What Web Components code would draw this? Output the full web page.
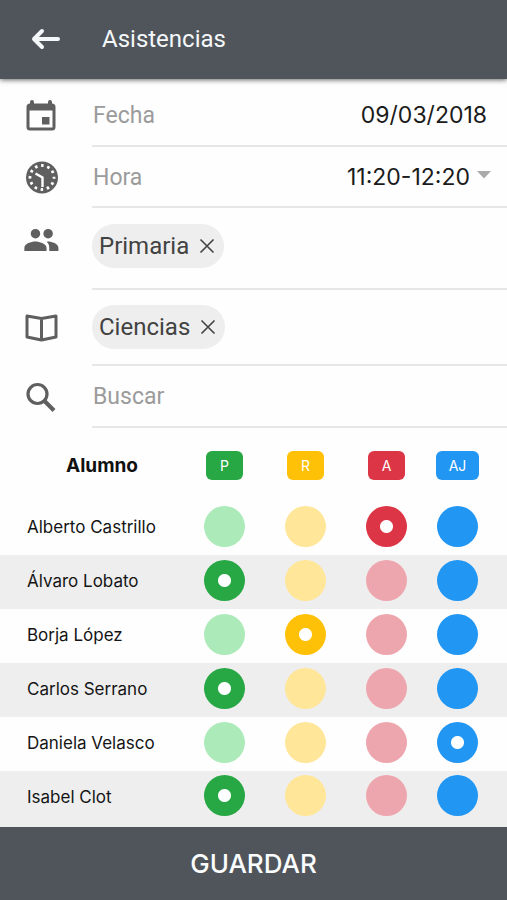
<!DOCTYPE html>
<html lang="es">
<head>
<meta charset="utf-8">
<meta name="viewport" content="width=device-width, initial-scale=1">
<title>Asistencias</title>
<style>
  body { margin: 0; background: #fefefe; font-family: Inter, "Liberation Sans", sans-serif; }
</style>
</head>
<body>
<attendance-page></attendance-page>
<script>
function define(name, html, setup) {
  const template = document.createElement('template');
  template.innerHTML = html;
  customElements.define(name, class extends HTMLElement {
    constructor() {
      super();
      this.attachShadow({ mode: 'open' }).append(template.content.cloneNode(true));
      if (setup) setup(this, this.shadowRoot);
    }
  });
}

define('app-header', `
  <style>
    :host { display: flex; align-items: center; gap: 40px; height: 79px; padding: 0 30px 2px; box-sizing: border-box;
      background: #50555c; color: #f4f8fa; box-shadow: 0 1px 5px rgba(0,0,0,.6); position: relative; }
    button { border: 0; padding: 0; background: none; color: inherit; display: flex; cursor: pointer; }
    h1 { margin: 0; font: 400 24px/32px Roboto, sans-serif; }
  </style>
  <button type="button" aria-label="Volver">
    <svg width="32" height="24" viewBox="0 0 32 24" fill="none" stroke="currentColor" stroke-width="4" stroke-linecap="round" stroke-linejoin="round"><path d="M28 12H4M12 4L4 12L12 20"/></svg>
  </button>
  <h1><slot></slot></h1>
`);

define('field-row', `
  <style>
    :host { display: grid; grid-template-columns: 92px minmax(0, 1fr); }
    .icon { display: flex; align-items: center; padding-left: 22px; color: #5f5f5f; }
    .body { display: flex; align-items: center; padding-right: 16px; border-bottom: 2px solid #e7e7e7; }
  </style>
  <div class="icon"><slot name="icon"></slot></div>
  <div class="body"><slot></slot></div>
`);

define('filter-chip', `
  <style>
    :host { display: inline-flex; align-items: center; gap: 9px; height: 44px; padding: 0 8px 0 7px; box-sizing: border-box;
      border-radius: 22px; background: #eee; color: #424242; font: 400 24px/32px Roboto, sans-serif; }
    button { border: 0; padding: 0; background: none; color: inherit; display: flex; cursor: pointer; }
  </style>
  <slot></slot>
  <button type="button" aria-label="Quitar">
    <svg width="18" height="18" viewBox="0 0 18 18" fill="none" stroke="currentColor" stroke-width="1.6"><path d="M2.5 2.5L15.5 15.5M15.5 2.5L2.5 15.5"/></svg>
  </button>
`);

define('status-badge', `
  <style>
    :host { display: inline-block; min-width: 37px; padding: 0 13px; box-sizing: border-box; border-radius: 6px;
      background: var(--on); color: #fff; font: 400 14px/29px Inter, sans-serif; text-align: center; }
  </style>
  <slot></slot>
`);

define('attendance-table', `
  <style>
    :host { display: block; }
    table { width: 100%; border-collapse: collapse; table-layout: fixed; }
    th, td { padding: 0; text-align: center; vertical-align: middle; }
    thead tr { height: 73px; }
    thead th { padding-top: 2px; }
    thead th:first-child { padding-left: 20px; font-size: 19px; line-height: 24px; color: #111; }
    tbody th { padding: 0 0 3px 27px; text-align: left; font-weight: 400; font-size: 17px; line-height: 24px; color: #151515; }
    tbody tr { height: 54px; }
    tbody tr:last-child { height: 56px; }
    tbody tr:last-child > * { padding-bottom: 5px; }
    tbody tr:nth-child(even) { background: #eee; }
    td:last-child, thead th:last-child { padding-right: 19px; }
    .s { width: 81px; }
    .last { width: 80px; }
    .p { --on: #28a745; --off: #acebb9; }
    .r { --on: #ffc107; --off: #ffe699; }
    .a { --on: #dc3545; --off: #eea6ae; }
    .j { --on: #2196f3; --off: #2196f3; }
    input { appearance: none; display: block; width: 41px; height: 41px; margin: 0 auto 3px; border-radius: 50%;
      background: var(--off); cursor: pointer; }
    input:checked { background: radial-gradient(circle, #fff 6px, var(--on) 7px); }
  </style>
  <table>
    <colgroup><col><col class="s"><col class="s"><col class="s"><col class="last"></colgroup>
    <thead><tr>
      <th scope="col">Alumno</th>
      <th scope="col" class="p"><status-badge>P</status-badge></th>
      <th scope="col" class="r"><status-badge>R</status-badge></th>
      <th scope="col" class="a"><status-badge>A</status-badge></th>
      <th scope="col" class="j"><status-badge>AJ</status-badge></th>
    </tr></thead>
    <tbody></tbody>
  </table>
`, (host, root) => {
  const students = [['Alberto Castrillo', 'a'], ['Álvaro Lobato', 'p'], ['Borja López', 'r'],
    ['Carlos Serrano', 'p'], ['Daniela Velasco', 'j'], ['Isabel Clot', 'p']];
  const labels = { p: 'P', r: 'R', a: 'A', j: 'AJ' };
  root.querySelector('tbody').innerHTML = students.map(([name, status], i) =>
    `<tr><th scope="row">${name}</th>${Object.keys(labels).map(key =>
      `<td class="${key}"><input type="radio" name="s${i}" aria-label="${name}: ${labels[key]}"${key === status ? ' checked' : ''}></td>`).join('')}</tr>`
  ).join('');
});

define('save-bar', `
  <style>
    :host { display: flex; flex: 1; min-height: 73px; background: #50555c; color: #fafcfd; }
    button { flex: 1; border: 0; padding: 0; background: none; color: inherit; font: 500 26px/32px Inter, sans-serif; cursor: pointer; }
  </style>
  <button type="button"><slot></slot></button>
`);

define('attendance-page', `
  <style>
    :host { display: flex; flex-direction: column; min-height: 100vh; }
    label { padding: 2px 0 0 1px; color: #9b9b9b; font: 400 23px/32px Roboto, sans-serif; }
    input, select { flex: 1; width: 0; min-width: 0; border: 0; padding: 0; margin: 0; background: none; color: #1b1b1b;
      font: 400 23px/32px Inter, sans-serif; text-align: right; outline-offset: 4px; }
    select { appearance: none; text-align-last: right; }
    input[type=search] { appearance: none; padding: 2px 0 0 1px; text-align: left; font: 400 23px/32px Roboto, sans-serif; }
    ::placeholder { color: #9b9b9b; opacity: 1; }
    field-row { box-sizing: border-box; }
    .date { height: 68px; padding-top: 6px; }
    .date input { margin-right: 4px; }
    .hour { height: 61px; }
    .group { height: 82px; }
    .group filter-chip { margin-bottom: 5px; }
    .subject { height: 76px; }
    .search { height: 62px; }
    .arrow { margin: 0 0 4px 7px; }
    .people { margin-bottom: 18px; }
  </style>
  <app-header>Asistencias</app-header>
  <field-row class="date">
    <svg slot="icon" width="38" height="38" viewBox="0 0 38 38" fill="currentColor"><path fill-rule="evenodd" d="M12 5a2 2 0 0 0-4 0v1.500a3.500 3.500 0 0 0-3.500 3.500v20a3.500 3.500 0 0 0 3.500 3.500h22a3.500 3.500 0 0 0 3.500-3.500V10a3.500 3.500 0 0 0-3.500-3.500V5a2 2 0 0 0-4 0v1.500H12zM7.500 13.500h23V30.500h-23z"/><path d="M20 20h7.500v7.500H20z"/></svg>
    <label for="date">Fecha</label><input id="date" type="text" value="09/03/2018">
  </field-row>
  <field-row class="hour">
    <svg slot="icon" width="40" height="40" viewBox="0 0 40 40"><circle cx="20" cy="19.500" r="16" fill="currentColor"/><circle cx="20" cy="19.500" r="12" fill="none" stroke="#fff" stroke-width="2.800" stroke-dasharray="2.600 3.683" stroke-dashoffset="1.300"/><path d="M13.500 15.500L20.500 19.500V29" fill="none" stroke="#fff" stroke-width="2.400"/></svg>
    <label for="hour">Hora</label><select id="hour"><option>11:20-12:20</option></select>
    <svg class="arrow" width="14" height="8" viewBox="0 0 14 8" fill="#aaa"><path d="M0 0H14L7 7.500z"/></svg>
  </field-row>
  <field-row class="group">
    <svg class="people" slot="icon" width="38" height="38" viewBox="0 0 24 24" fill="currentColor"><path d="M16.500 11a3 3 0 1 0 0-6 3 3 0 0 0 0 6zM8.500 11a3 3 0 1 0 0-6 3 3 0 0 0 0 6zM8.500 13C5.800 13 1.500 14.300 1.500 17v2h14V17c0-2.700-4.700-4-7-4zM16.500 13l-1 .1c1.200.9 1.700 2.200 1.700 3.900v2H23V17c0-2.700-4.200-4-6.500-4z"/></svg>
    <filter-chip>Primaria</filter-chip>
  </field-row>
  <field-row class="subject">
    <svg slot="icon" width="38" height="38" viewBox="0 0 38 38" fill="none" stroke="currentColor" stroke-width="3" stroke-linejoin="round"><path d="M19.500 9.500L5 7V28L19.500 31L34 28V7zM19.500 9.500V31"/></svg>
    <filter-chip>Ciencias</filter-chip>
  </field-row>
  <field-row class="search">
    <svg slot="icon" width="38" height="38" viewBox="0 0 38 38" fill="none" stroke="currentColor" stroke-width="3.200"><circle cx="15.500" cy="16" r="9.500"/><path d="M22.500 23L32 32.500" stroke-width="4"/></svg>
    <input type="search" placeholder="Buscar" aria-label="Buscar">
  </field-row>
  <attendance-table></attendance-table>
  <save-bar>GUARDAR</save-bar>
`);
</script>
</body>
</html>
